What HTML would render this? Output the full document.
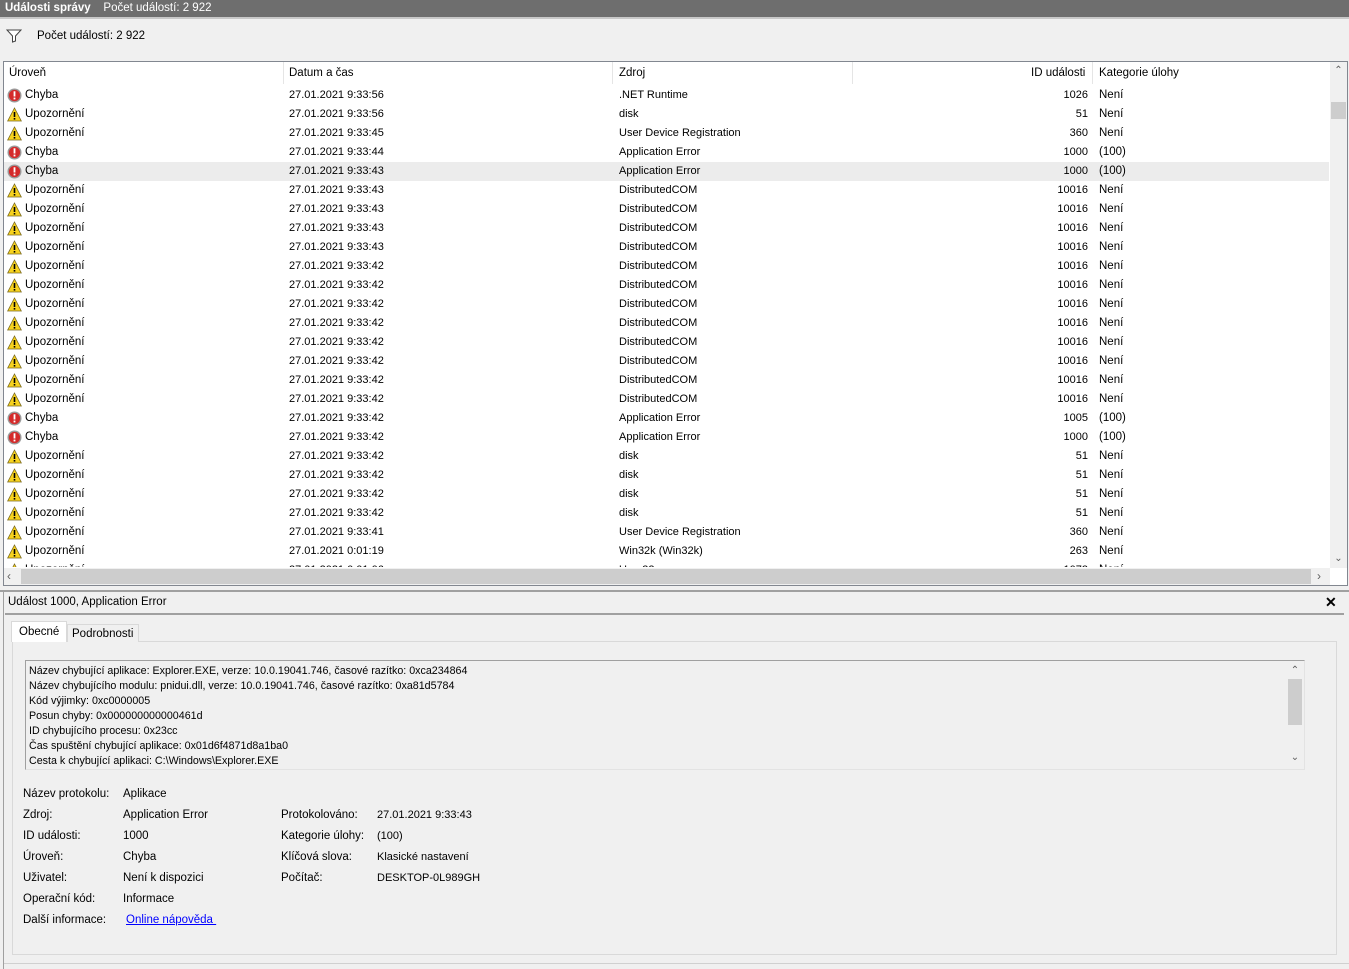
<!DOCTYPE html>
<html><head><meta charset="utf-8">
<style>
*{box-sizing:border-box;margin:0;padding:0}
body{width:1349px;height:969px;background:#f0f0f0;font-family:"Liberation Sans",sans-serif;font-size:11px;color:#000;position:relative;overflow:hidden}
.abs{position:absolute}
#title{left:0;top:0;width:1349px;height:17px;background:#6e6e6e;color:#fff;line-height:16px;padding-left:5px;white-space:nowrap;font-size:11.5px}
#list{left:3px;top:61px;width:1345px;height:525px;border:1px solid #828790;background:#fff;overflow:hidden}
.hdr{position:absolute;top:0;height:22px;line-height:22px;white-space:nowrap;font-size:11.5px}
.sep{position:absolute;top:0;width:1px;height:22px;background:#e5e5e5}
.row{position:absolute;left:0;width:1325px;height:19px;line-height:19px;white-space:nowrap}
.row span{position:absolute;top:0}
.c1{left:21px;font-size:11.5px}.c2{left:285px}.c3{left:615px}.c4{right:241px}.c5{left:1095px;font-size:11.5px}
.row svg{position:absolute;left:3px;top:2px}
.sel{background:#ececec}
</style></head><body>
<div id="title" class="abs"><b>Události správy</b>&nbsp;&nbsp;&nbsp;&nbsp;Počet událostí: 2 922</div>
<div class="abs" style="left:0;top:17px;width:1349px;height:2px;background:#c8c8c8"></div>
<svg class="abs" style="left:6px;top:29px" width="16" height="14" viewBox="0 0 16 14"><path d="M1 1H15L9.5 7V12L6.5 13V7Z" fill="#fff" stroke="#444" stroke-width="1"/></svg>
<div class="abs" style="left:37px;top:30px;font-size:11.5px">Počet událostí: 2 922</div>
<div id="list" class="abs">
<div class="hdr" style="left:5px">Úroveň</div><div class="sep" style="left:279px"></div>
<div class="hdr" style="left:285px">Datum a čas</div><div class="sep" style="left:608px"></div>
<div class="hdr" style="left:615px">Zdroj</div><div class="sep" style="left:848px"></div>
<div class="hdr" style="left:1027px">ID události</div><div class="sep" style="left:1088px"></div>
<div class="hdr" style="left:1095px">Kategorie úlohy</div>
<div class="abs" style="left:1326px;top:0;width:17px;height:506px;background:#f0f0f0"></div>
<div class="abs" style="left:1326px;top:0;width:17px;height:17px;text-align:center;color:#606060;font-size:10px;line-height:17px">&#8963;</div>
<div class="abs" style="left:1327px;top:40px;width:15px;height:17px;background:#cdcdcd"></div>
<div class="abs" style="left:1326px;top:490px;width:17px;height:17px;text-align:center;color:#606060;font-size:10px;line-height:14px">&#8964;</div>
<div class="abs" style="left:0;top:506px;width:1326px;height:17px;background:#f0f0f0"></div>
<div class="abs" style="left:17px;top:507px;width:1290px;height:15px;background:#cdcdcd"></div>
<div class="abs" style="left:3px;top:506px;color:#606060;line-height:17px;font-size:12px">&lsaquo;</div>
<div class="abs" style="left:1313px;top:506px;color:#606060;line-height:17px;font-size:12px">&rsaquo;</div>
</div>
<div class="abs" style="left:0;top:590px;width:1349px;height:2px;background:#a0a0a0"></div>
<div class="abs" style="left:3px;top:592px;width:1px;height:377px;background:#a0a0a0"></div>
<div class="abs" style="left:8px;top:596px;font-size:11.5px">Událost 1000, Application Error</div>
<div class="abs" style="left:1325px;top:592px;font-weight:bold;font-size:14px;line-height:20px">✕</div>
<div class="abs" style="left:5px;top:613px;width:1339px;height:2px;background:#a0a0a0"></div>
<div class="abs" style="left:12px;top:641px;width:1325px;height:314px;border:1px solid #d9d9d9;background:#f0f0f0"></div>
<div class="abs" style="left:67px;top:624px;width:72px;height:18px;border:1px solid #d9d9d9;border-bottom:none;background:#f0f0f0;padding-left:4px;line-height:18px;font-size:11.5px">Podrobnosti</div>
<div class="abs" style="left:11px;top:621px;width:56px;height:21px;border:1px solid #d9d9d9;border-bottom:none;background:#fff;padding-left:7px;line-height:20px;font-size:11.5px">Obecné</div>
<div class="abs" style="left:25px;top:660px;width:1280px;height:110px;border:1px solid #a0a0a0;border-right-color:#e3e3e3;border-bottom-color:#e3e3e3;background:#f0f0f0;padding:3px 0 0 3px;line-height:15px;white-space:nowrap;font-size:10.7px">Název chybující aplikace: Explorer.EXE, verze: 10.0.19041.746, časové razítko: 0xca234864<br>Název chybujícího modulu: pnidui.dll, verze: 10.0.19041.746, časové razítko: 0xa81d5784<br>Kód výjimky: 0xc0000005<br>Posun chyby: 0x000000000000461d<br>ID chybujícího procesu: 0x23cc<br>Čas spuštění chybující aplikace: 0x01d6f4871d8a1ba0<br>Cesta k chybující aplikaci: C:\Windows\Explorer.EXE</div>
<div class="abs" style="left:1287px;top:662px;width:16px;height:106px;background:#f0f0f0"></div>
<div class="abs" style="left:1287px;top:662px;width:16px;height:16px;text-align:center;color:#606060;font-size:10px;line-height:18px">&#8963;</div>
<div class="abs" style="left:1288px;top:679px;width:14px;height:46px;background:#cdcdcd"></div>
<div class="abs" style="left:1287px;top:752px;width:16px;height:16px;text-align:center;color:#606060;font-size:10px;line-height:12px">&#8964;</div>
<div class="abs" style="left:23px;top:784px;line-height:21px;font-size:11.5px">Název protokolu:<br>Zdroj:<br>ID události:<br>Úroveň:<br>Uživatel:<br>Operační kód:<br>Další informace:</div>
<div class="abs" style="left:123px;top:784px;line-height:21px;font-size:11.5px">Aplikace<br>Application Error<br>1000<br>Chyba<br>Není k dispozici<br>Informace<br><span style="color:#0000ff;text-decoration:underline;margin-left:3px">Online nápověda&nbsp;</span></div>
<div class="abs" style="left:281px;top:805px;line-height:21px;font-size:11.5px">Protokolováno:<br>Kategorie úlohy:<br>Klíčová slova:<br>Počítač:</div>
<div class="abs" style="left:377px;top:805px;line-height:21px;font-size:11px">27.01.2021 9:33:43<br>(100)<br>Klasické nastavení<br>DESKTOP-0L989GH</div>
<div class="abs" style="left:4px;top:963px;width:1345px;height:1px;background:#d0d0d0"></div>

<svg width="0" height="0" style="position:absolute"><defs>
<symbol id="e" viewBox="0 0 15 15"><circle cx="7.5" cy="7.5" r="7" fill="#9a9a9a"/><circle cx="7.5" cy="7.5" r="5.6" fill="#d42a2a"/><rect x="6.6" y="3.3" width="1.8" height="5.2" fill="#fff"/><rect x="6.6" y="9.6" width="1.8" height="1.8" fill="#fff"/></symbol>
<symbol id="w" viewBox="0 0 15 15"><path d="M7.5 1L14.3 14H0.7Z" fill="#f7d21e" stroke="#7a6a20" stroke-width="0.8"/><rect x="6.7" y="5" width="1.6" height="5" fill="#000"/><rect x="6.7" y="11" width="1.6" height="1.6" fill="#000"/></symbol>
</defs></svg>
<div class="abs" style="left:4px;top:86px;width:1325px;height:481px;overflow:hidden">
<div class="row" style="top:0"><svg width="15" height="15"><use href="#e"/></svg><span class="c1">Chyba</span><span class="c2">27.01.2021 9:33:56</span><span class="c3">.NET Runtime</span><span class="c4">1026</span><span class="c5">Není</span></div>
<div class="row" style="top:19px"><svg width="15" height="15"><use href="#w"/></svg><span class="c1">Upozornění</span><span class="c2">27.01.2021 9:33:56</span><span class="c3">disk</span><span class="c4">51</span><span class="c5">Není</span></div>
<div class="row" style="top:38px"><svg width="15" height="15"><use href="#w"/></svg><span class="c1">Upozornění</span><span class="c2">27.01.2021 9:33:45</span><span class="c3">User Device Registration</span><span class="c4">360</span><span class="c5">Není</span></div>
<div class="row" style="top:57px"><svg width="15" height="15"><use href="#e"/></svg><span class="c1">Chyba</span><span class="c2">27.01.2021 9:33:44</span><span class="c3">Application Error</span><span class="c4">1000</span><span class="c5">(100)</span></div>
<div class="row sel" style="top:76px"><svg width="15" height="15"><use href="#e"/></svg><span class="c1">Chyba</span><span class="c2">27.01.2021 9:33:43</span><span class="c3">Application Error</span><span class="c4">1000</span><span class="c5">(100)</span></div>
<div class="row" style="top:95px"><svg width="15" height="15"><use href="#w"/></svg><span class="c1">Upozornění</span><span class="c2">27.01.2021 9:33:43</span><span class="c3">DistributedCOM</span><span class="c4">10016</span><span class="c5">Není</span></div>
<div class="row" style="top:114px"><svg width="15" height="15"><use href="#w"/></svg><span class="c1">Upozornění</span><span class="c2">27.01.2021 9:33:43</span><span class="c3">DistributedCOM</span><span class="c4">10016</span><span class="c5">Není</span></div>
<div class="row" style="top:133px"><svg width="15" height="15"><use href="#w"/></svg><span class="c1">Upozornění</span><span class="c2">27.01.2021 9:33:43</span><span class="c3">DistributedCOM</span><span class="c4">10016</span><span class="c5">Není</span></div>
<div class="row" style="top:152px"><svg width="15" height="15"><use href="#w"/></svg><span class="c1">Upozornění</span><span class="c2">27.01.2021 9:33:43</span><span class="c3">DistributedCOM</span><span class="c4">10016</span><span class="c5">Není</span></div>
<div class="row" style="top:171px"><svg width="15" height="15"><use href="#w"/></svg><span class="c1">Upozornění</span><span class="c2">27.01.2021 9:33:42</span><span class="c3">DistributedCOM</span><span class="c4">10016</span><span class="c5">Není</span></div>
<div class="row" style="top:190px"><svg width="15" height="15"><use href="#w"/></svg><span class="c1">Upozornění</span><span class="c2">27.01.2021 9:33:42</span><span class="c3">DistributedCOM</span><span class="c4">10016</span><span class="c5">Není</span></div>
<div class="row" style="top:209px"><svg width="15" height="15"><use href="#w"/></svg><span class="c1">Upozornění</span><span class="c2">27.01.2021 9:33:42</span><span class="c3">DistributedCOM</span><span class="c4">10016</span><span class="c5">Není</span></div>
<div class="row" style="top:228px"><svg width="15" height="15"><use href="#w"/></svg><span class="c1">Upozornění</span><span class="c2">27.01.2021 9:33:42</span><span class="c3">DistributedCOM</span><span class="c4">10016</span><span class="c5">Není</span></div>
<div class="row" style="top:247px"><svg width="15" height="15"><use href="#w"/></svg><span class="c1">Upozornění</span><span class="c2">27.01.2021 9:33:42</span><span class="c3">DistributedCOM</span><span class="c4">10016</span><span class="c5">Není</span></div>
<div class="row" style="top:266px"><svg width="15" height="15"><use href="#w"/></svg><span class="c1">Upozornění</span><span class="c2">27.01.2021 9:33:42</span><span class="c3">DistributedCOM</span><span class="c4">10016</span><span class="c5">Není</span></div>
<div class="row" style="top:285px"><svg width="15" height="15"><use href="#w"/></svg><span class="c1">Upozornění</span><span class="c2">27.01.2021 9:33:42</span><span class="c3">DistributedCOM</span><span class="c4">10016</span><span class="c5">Není</span></div>
<div class="row" style="top:304px"><svg width="15" height="15"><use href="#w"/></svg><span class="c1">Upozornění</span><span class="c2">27.01.2021 9:33:42</span><span class="c3">DistributedCOM</span><span class="c4">10016</span><span class="c5">Není</span></div>
<div class="row" style="top:323px"><svg width="15" height="15"><use href="#e"/></svg><span class="c1">Chyba</span><span class="c2">27.01.2021 9:33:42</span><span class="c3">Application Error</span><span class="c4">1005</span><span class="c5">(100)</span></div>
<div class="row" style="top:342px"><svg width="15" height="15"><use href="#e"/></svg><span class="c1">Chyba</span><span class="c2">27.01.2021 9:33:42</span><span class="c3">Application Error</span><span class="c4">1000</span><span class="c5">(100)</span></div>
<div class="row" style="top:361px"><svg width="15" height="15"><use href="#w"/></svg><span class="c1">Upozornění</span><span class="c2">27.01.2021 9:33:42</span><span class="c3">disk</span><span class="c4">51</span><span class="c5">Není</span></div>
<div class="row" style="top:380px"><svg width="15" height="15"><use href="#w"/></svg><span class="c1">Upozornění</span><span class="c2">27.01.2021 9:33:42</span><span class="c3">disk</span><span class="c4">51</span><span class="c5">Není</span></div>
<div class="row" style="top:399px"><svg width="15" height="15"><use href="#w"/></svg><span class="c1">Upozornění</span><span class="c2">27.01.2021 9:33:42</span><span class="c3">disk</span><span class="c4">51</span><span class="c5">Není</span></div>
<div class="row" style="top:418px"><svg width="15" height="15"><use href="#w"/></svg><span class="c1">Upozornění</span><span class="c2">27.01.2021 9:33:42</span><span class="c3">disk</span><span class="c4">51</span><span class="c5">Není</span></div>
<div class="row" style="top:437px"><svg width="15" height="15"><use href="#w"/></svg><span class="c1">Upozornění</span><span class="c2">27.01.2021 9:33:41</span><span class="c3">User Device Registration</span><span class="c4">360</span><span class="c5">Není</span></div>
<div class="row" style="top:456px"><svg width="15" height="15"><use href="#w"/></svg><span class="c1">Upozornění</span><span class="c2">27.01.2021 0:01:19</span><span class="c3">Win32k (Win32k)</span><span class="c4">263</span><span class="c5">Není</span></div>
<div class="row" style="top:475px"><svg width="15" height="15"><use href="#w"/></svg><span class="c1">Upozornění</span><span class="c2">27.01.2021 0:01:06</span><span class="c3">User32</span><span class="c4">1073</span><span class="c5">Není</span></div>
</div>
</body></html>
